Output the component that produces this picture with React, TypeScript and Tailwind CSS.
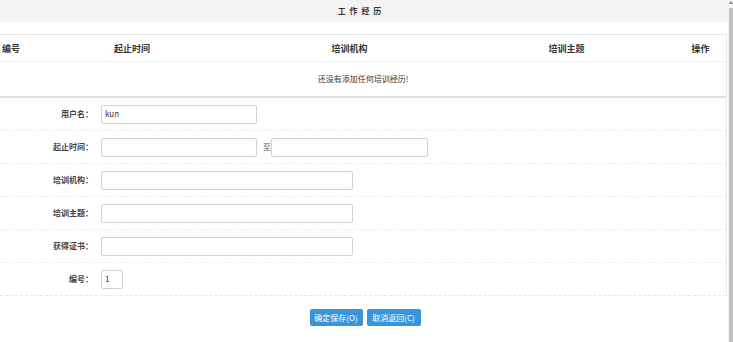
import React from "react";

const Label = ({ children }: { children: React.ReactNode }) => (
  <div className="w-[93px] shrink-0 text-right text-[8px] font-bold text-[#444] leading-none">{children}</div>
);

const Input = ({ w, value }: { w: string; value?: string }) => (
  <div className={`${w} h-[19px] border border-[#d2d2d2] rounded-[2px] bg-white flex items-center pl-[3px] text-[8px] text-[#333] leading-none`}>
    {value}
  </div>
);

export default function App() {
  return (
    <div className="relative w-[733px] h-[342px] bg-white overflow-hidden font-['Noto_Sans_CJK_SC','Noto_Sans',sans-serif] text-[#333]">
      <div className="w-[728px]">
        <div className="h-[22px] bg-[#f4f4f4] flex items-center justify-center text-[8px] font-bold tracking-[1px] pr-[8px]">
          工 作 经 历
        </div>
        <div className="h-[12px]" />
        <div className="w-[727px] border-t border-r border-[#e8e8e8]">
          <div className="h-[27px] flex items-center border-b border-[#efefef] text-[9px] font-bold text-[#333] leading-none">
            <div className="w-[23px] pl-[2px]">编号</div>
            <div className="w-[218px] text-center">起止时间</div>
            <div className="w-[217px] text-center">培训机构</div>
            <div className="w-[217px] text-center">培训主题</div>
            <div className="flex-1 text-center">操作</div>
          </div>
          <div className="h-[36px] flex items-center justify-center text-[8px] text-[#333] leading-none border-b-2 border-[#e0e0e0]">
            还没有添加任何培训经历!
          </div>
        </div>
        <div className="w-[727px] border-r border-[#ececec]">
          <div className="h-[33px] flex items-center gap-[8px] border-b border-dashed border-[#ededed]">
            <Label>用户名：</Label>
            <Input w="w-[156px]" value="kun" />
          </div>
          <div className="h-[33px] flex items-center gap-[8px] border-b border-dashed border-[#ededed]">
            <Label>起止时间：</Label>
            <div className="flex items-center">
              <Input w="w-[156px]" />
              <span className="ml-[6px] text-[8px] text-[#555] leading-none">至</span>
              <Input w="w-[157px]" />
            </div>
          </div>
          <div className="h-[33px] flex items-center gap-[8px] border-b border-dashed border-[#ededed]">
            <Label>培训机构：</Label>
            <Input w="w-[252px]" />
          </div>
          <div className="h-[33px] flex items-center gap-[8px] border-b border-dashed border-[#ededed]">
            <Label>培训主题：</Label>
            <Input w="w-[252px]" />
          </div>
          <div className="h-[33px] flex items-center gap-[8px] border-b border-dashed border-[#ededed]">
            <Label>获得证书：</Label>
            <Input w="w-[252px]" />
          </div>
          <div className="h-[33px] flex items-center gap-[8px] border-b border-dashed border-[#e6e6e6]">
            <Label>编号：</Label>
            <Input w="w-[22px]" value="1" />
          </div>
        </div>
        <div className="mt-[13px] flex justify-center gap-[4px] pl-[2px]">
          <button className="w-[53px] h-[17px] rounded-[2px] bg-[#3895d9] text-white text-[8px] leading-none flex items-center justify-center">
            确定保存(O)
          </button>
          <button className="w-[54px] h-[17px] rounded-[2px] bg-[#3895d9] text-white text-[8px] leading-none flex items-center justify-center">
            取消返回(C)
          </button>
        </div>
      </div>
      <div className="absolute right-0 top-0 w-[5px] h-full bg-[#f5f5f5]">
        <div className="mx-auto mt-[1px] w-0 h-0 border-l-[2px] border-r-[2px] border-b-[3px] border-l-transparent border-r-transparent border-b-[#888]" />
        <div className="absolute left-[1px] right-0 top-[8px] bottom-0 bg-[#c1c1c1]" />
      </div>
    </div>
  );
}
